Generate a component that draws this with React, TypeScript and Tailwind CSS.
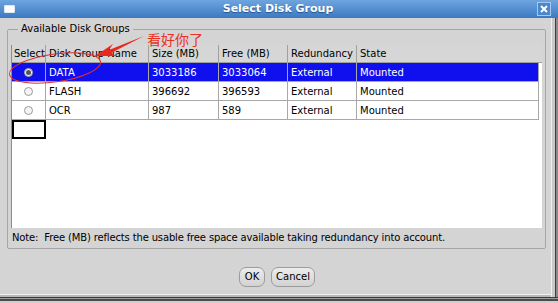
const rows = [
  { name: "DATA", size: "3033186", free: "3033064", red: "External", state: "Mounted", sel: true },
  { name: "FLASH", size: "396692", free: "396593", red: "External", state: "Mounted", sel: false },
  { name: "OCR", size: "987", free: "589", red: "External", state: "Mounted", sel: false },
];

function Radio({ on }: { on: boolean }) {
  return (
    <span className="w-[9px] h-[9px] rounded-full border border-[#9a9a9a] bg-[#f4f4f4] flex items-center justify-center">
      {on && <span className="w-[5px] h-[5px] rounded-full bg-[#555]" />}
    </span>
  );
}

export default function App() {
  return (
    <div className="w-[558px] h-[303px] bg-[#d4d4d4] relative overflow-hidden flex flex-col font-['DejaVu_Sans',sans-serif] text-[10px] text-black">
      {/* title bar */}
      <div className="h-[18px] bg-gradient-to-b from-[#6ea5df] to-[#3a79c2] flex items-center px-[4px] shrink-0">
        <div className="w-[11px] h-[8px] bg-white border border-[#dfe9f5] rounded-[1px]" />
        <div className="flex-1 text-center text-white font-bold text-[11px] pl-[4px] [text-shadow:0_1px_1px_#24528a]">
          Select Disk Group
        </div>
        <div className="w-[14px] h-[14px] mr-[3px] border border-[#a9c8ea] bg-[#4a86cc] flex items-center justify-center">
          <svg width="8" height="8" viewBox="0 0 8 8">
            <path d="M1 1 L7 7 M7 1 L1 7" stroke="white" strokeWidth="2" />
          </svg>
        </div>
      </div>

      {/* body */}
      <div className="flex-1 flex flex-col">
        <div className="relative ml-[7px] mt-[11px] w-[539px] h-[220px] border border-[#a6a6a6] rounded-[2px] pt-[15px] pl-[3px] pr-[3px] flex flex-col">
          <span className="absolute left-[10px] top-[-8px] bg-[#d4d4d4] px-[3px] leading-[14px]">Available Disk Groups</span>

          <div className="h-[183px] bg-white border-l border-[#8c8c8c] flex flex-col">
            <div className="flex h-[18px] bg-[#d6d6d6] border-b border-[#a0a0a0]">
              <div className="w-[34px] border-r border-[#a0a0a0] pl-[2px] flex items-center">Select</div>
              <div className="w-[103px] border-r border-[#a0a0a0] pl-[3px] flex items-center">Disk Group Name</div>
              <div className="w-[70px] border-r border-[#a0a0a0] pl-[3px] flex items-center">Size (MB)</div>
              <div className="w-[69px] border-r border-[#a0a0a0] pl-[3px] flex items-center">Free (MB)</div>
              <div className="w-[69px] border-r border-[#a0a0a0] pl-[3px] flex items-center">Redundancy</div>
              <div className="flex-1 pl-[3px] flex items-center">State</div>
            </div>
            {rows.map((r) => (
              <div
                key={r.name}
                className={`flex h-[19px] w-[527px] border-b border-r border-[#a8a8a8] ${r.sel ? "bg-[#1010ee] text-white" : "bg-white"}`}
              >
                <div className="w-[34px] border-r border-[#a8a8a8] flex items-center justify-center">
                  <Radio on={r.sel} />
                </div>
                <div className="w-[103px] border-r border-[#a8a8a8] pl-[3px] flex items-center">{r.name}</div>
                <div className="w-[70px] border-r border-[#a8a8a8] pl-[3px] flex items-center">{r.size}</div>
                <div className="w-[69px] border-r border-[#a8a8a8] pl-[3px] flex items-center">{r.free}</div>
                <div className="w-[69px] border-r border-[#a8a8a8] pl-[3px] flex items-center">{r.red}</div>
                <div className="flex-1 pl-[3px] flex items-center">{r.state}</div>
              </div>
            ))}
            <div className="w-[34px] h-[19px] border-2 border-black" />
          </div>

          <div className="h-[19px] flex items-center pl-[1px] tracking-[-0.15px]">
            Note:&nbsp; Free (MB) reflects the usable free space available taking redundancy into account.
          </div>
        </div>

        <div className="flex gap-[6px] pl-[239px] mt-[18px]">
          <button className="w-[26px] h-[20px] rounded-[7px] border border-[#9c9c9c] bg-gradient-to-b from-[#ececec] to-[#d2d2d2] text-[10px] leading-none">OK</button>
          <button className="w-[44px] h-[20px] rounded-[7px] border border-[#9c9c9c] bg-gradient-to-b from-[#ececec] to-[#d2d2d2] text-[10px] leading-none">Cancel</button>
        </div>
      </div>

      {/* bottom frame */}
      <div className="h-[1px] bg-[#f2f2f2]" />
      <div className="h-[2px] bg-[#b8b8b8]" />
      <div className="h-[1px] bg-[#3c3c3c]" />
      <div className="h-[1px] bg-[#9a9a9a]" />
      <div className="h-[2px] bg-[#4a4a4a]" />
      <div className="h-[2px] bg-[#cfcfcf]" />

      {/* right frame */}
      <div className="absolute top-[18px] right-0 w-[7px] h-[279px] flex">
        <div className="w-[1px] bg-[#f0f0f0]" />
        <div className="w-[3px] bg-[#c8c8c8]" />
        <div className="w-[1px] bg-[#404040]" />
        <div className="w-[2px] bg-[#8a8a8a]" />
      </div>

      {/* annotation */}
      <svg className="absolute left-0 top-0 pointer-events-none" width="558" height="303">
        <ellipse cx="55" cy="68" rx="46" ry="14" transform="rotate(-8 55 68)" fill="none" stroke="#e0302a" strokeWidth="1" />
        <polygon points="95,56 113,44 109,50 144,36 111,53 116,56" fill="#e8281e" />
      </svg>
      <span className="absolute left-[147px] top-[31px] text-[14px] leading-[16px] text-[#ea3020] font-['Noto_Sans_CJK_SC',sans-serif]">看好你了</span>
    </div>
  );
}
